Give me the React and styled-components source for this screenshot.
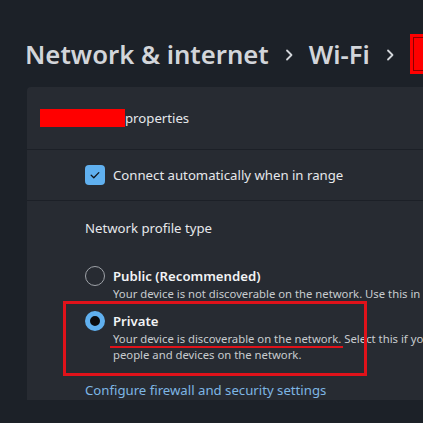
import styled, { createGlobalStyle } from "styled-components";

const GlobalStyle = createGlobalStyle`
  html, body {
    margin: 0;
    padding: 0;
    background: #1c2128;
    overflow: hidden;
  }
  body {
    font-family: "Noto Sans", "Open Sans", sans-serif;
    color: #e6e8eb;
  }
`;

const Chevron = () => (
  <ChevronIcon width="10" height="14" viewBox="0 0 10 14">
    <path d="M3 2.5 L7.5 7 L3 11.5" fill="none" stroke="#d2d5da" strokeWidth="1.8" strokeLinecap="round" strokeLinejoin="round" />
  </ChevronIcon>
);

const Check = () => (
  <svg width="12" height="12" viewBox="0 0 12 12">
    <path d="M2.2 6.3 L4.8 8.8 L9.8 3.6" fill="none" stroke="#10151b" strokeWidth="1.3" strokeLinecap="round" strokeLinejoin="round" />
  </svg>
);

export default function App() {
  return (
    <Page>
      <GlobalStyle />
      <Breadcrumb>
        <Crumb>Network &amp; internet</Crumb>
        <Chevron />
        <Crumb>Wi-Fi</Crumb>
        <Chevron />
        <Redacted $tall />
      </Breadcrumb>

      <Card>
        <CardHeader>
          <Redacted />
          <span>properties</span>
        </CardHeader>

        <Row>
          <CheckBox>
            <Check />
          </CheckBox>
          <RowText>Connect automatically when in range</RowText>
        </Row>

        <Section>
          <SectionTitle>Network profile type</SectionTitle>

          <Option>
            <Radio />
            <OptionBody>
              <OptionLabel>Public (Recommended)</OptionLabel>
              <OptionDesc>
                Your device is not discoverable on the network. Use this in most cases—when connected to a network at home, work, or in a public place.
              </OptionDesc>
            </OptionBody>
          </Option>

          <Option $marked>
            <Radio $checked />
            <OptionBody>
              <OptionLabel>Private</OptionLabel>
              <OptionDesc>
                <Underlined>Your device is discoverable on the network.</Underlined> Select this if you need file sharing or use apps that communicate over this network. You should know and trust the
              </OptionDesc>
              <OptionDesc>people and devices on the network.</OptionDesc>
            </OptionBody>
          </Option>

          <Link href="#">Configure firewall and security settings</Link>
        </Section>
      </Card>
    </Page>
  );
}

const Page = styled.div`
  width: 423px;
  height: 423px;
  overflow: hidden;
  padding-top: 35px;
  box-sizing: border-box;
`;

const Breadcrumb = styled.div`
  display: flex;
  align-items: center;
  gap: 15px;
  padding-left: 25px;
  height: 38px;
  white-space: nowrap;
`;

const ChevronIcon = styled.svg`
  flex-shrink: 0;
  margin-top: 2px;
`;

const Crumb = styled.span`
  flex-shrink: 0;
  font-size: 25.7px;
  font-weight: 600;
  color: #d2d5da;
`;

const Redacted = styled.span`
  display: inline-block;
  flex-shrink: 0;
  background: #ff0000;
  width: ${({ $tall }) => ($tall ? "30px" : "85px")};
  height: ${({ $tall }) => ($tall ? "40px" : "18px")};
  box-shadow: ${({ $tall }) => ($tall ? "inset 0 0 0 3px #ff0000, inset 0 0 0 4px #8a0000" : "none")};
`;

const Card = styled.div`
  margin-top: 14px;
  margin-left: 27px;
  width: 1000px;
  background: #272b32;
  border-radius: 4px 0 0 0;
`;

const CardHeader = styled.div`
  display: flex;
  align-items: center;
  height: 62px;
  padding-left: 13px;
  font-size: 13.2px;
  color: #e6e8eb;
  border-bottom: 1px solid #1c2027;
`;

const Row = styled.div`
  display: flex;
  align-items: center;
  gap: 8px;
  height: 50px;
  padding-left: 58px;
  border-bottom: 1px solid #1c2027;
`;

const CheckBox = styled.span`
  width: 20px;
  height: 20px;
  border-radius: 4px;
  background: #60b0ef;
  display: flex;
  align-items: center;
  justify-content: center;
`;

const RowText = styled.span`
  font-size: 13.2px;
  color: #e6e8eb;
`;

const Section = styled.div`
  padding: 17px 0 0 58px;
  display: flex;
  flex-direction: column;
`;

const SectionTitle = styled.div`
  font-size: 13.2px;
  color: #e6e8eb;
  height: 20px;
  line-height: 20px;
  margin-bottom: 28px;
`;

const Option = styled.div`
  position: relative;
  display: flex;
  gap: 8px;
  margin-bottom: 9px;
  white-space: nowrap;

  &::after {
    content: "";
    display: ${({ $marked }) => ($marked ? "block" : "none")};
    position: absolute;
    left: -22px;
    top: -10px;
    width: 304px;
    height: 75px;
    box-sizing: border-box;
    border: 3px solid #e0121a;
    pointer-events: none;
  }
`;

const Radio = styled.span`
  flex-shrink: 0;
  width: 20px;
  height: 20px;
  border-radius: 50%;
  box-sizing: border-box;
  background: ${({ $checked }) => ($checked ? "#0b0d10" : "transparent")};
  border: ${({ $checked }) => ($checked ? "5px solid #60b0ef" : "1px solid #9ea2a8")};
`;

const OptionBody = styled.div`
  display: flex;
  flex-direction: column;
`;

const OptionLabel = styled.div`
  font-size: 13.2px;
  font-weight: 600;
  color: #f2f3f5;
  line-height: 20px;
`;

const OptionDesc = styled.div`
  font-size: 11.3px;
  color: #c8cbcf;
  line-height: 16px;
`;

const Underlined = styled.span`
  position: relative;

  &::after {
    content: "";
    position: absolute;
    left: -3px;
    right: -2px;
    bottom: -2px;
    height: 2px;
    background: #e0121a;
  }
`;

const Link = styled.a`
  font-size: 13.2px;
  color: #7eb6e4;
  text-decoration: none;
  line-height: 20px;
  margin-top: 8px;
`;
